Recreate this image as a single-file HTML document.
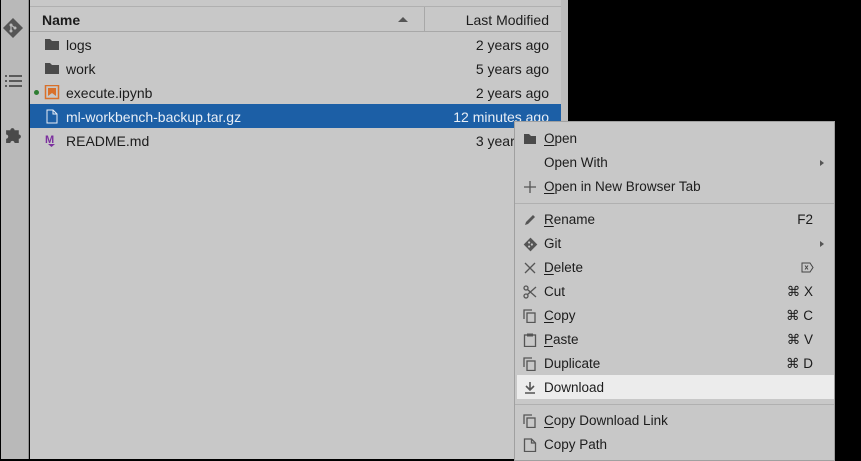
<!DOCTYPE html><html><head><style>
*{margin:0;padding:0;box-sizing:border-box}
body{width:861px;height:460px;background:#000;position:relative;overflow:hidden;font-family:"Liberation Sans",Arial,sans-serif;font-size:13px;color:#1c1c1c}
.side{position:absolute;left:1px;top:0;width:28px;height:459px;background:#b9b9b9;border-right:1px solid #8f8f8f}
.panel{position:absolute;left:30px;top:0;width:531px;height:459px;background:#c8c8c8;font-size:14px}
.strip{position:absolute;left:561px;top:0;width:7px;height:459px;background:#bdbdbd}
.hdr{position:absolute;left:0;top:6px;width:531px;height:26px;border-top:1px solid #b0b0b0;border-bottom:1px solid #a8a8a8;font-weight:bold}
.row{position:absolute;left:0;width:531px;height:24px;line-height:26px}
.row .n{position:absolute;left:36px}.row .d{position:absolute;right:12px}
.sel{background:#1c5fa6;color:#e8eef6}
.ic{position:absolute;left:14px;top:5px}
.menu{position:absolute;left:514px;top:121px;width:321px;height:340px;background:#c8c8c8;border:1px solid #a0a0a0;font-size:13.5px}
.mi{position:absolute;left:0;width:319px;height:24px;line-height:26px}
.mi .t{position:absolute;left:29px}.mi .k{position:absolute;right:21px}
.mi svg{position:absolute;left:8px;top:6px}
.u{text-decoration:underline;text-underline-offset:2px}
.sep{position:absolute;left:0;width:319px;height:1px;background:#b0b0b0}
.arr{position:absolute;right:10px;top:10px;width:0;height:0;border-left:4px solid #555;border-top:3.5px solid transparent;border-bottom:3.5px solid transparent}
</style></head><body>
<div class="side">
<svg style="position:absolute;left:1px;top:17px" width="22" height="22" viewBox="0 0 22 22"><path d="M11 1 L21 11 L11 21 L1 11Z" fill="#555"/><circle cx="9" cy="8" r="1.5" fill="#b9b9b9"/><circle cx="9" cy="14" r="1.5" fill="#b9b9b9"/><circle cx="13" cy="11" r="1.5" fill="#b9b9b9"/><path d="M9 8V14M9 8L13 11" stroke="#b9b9b9" stroke-width="1.2"/></svg>
<svg style="position:absolute;left:4px;top:74px" width="17" height="14"><g fill="#5a5a5a"><rect x="0" y="1" width="2" height="2"/><rect x="4" y="1" width="13" height="2"/><rect x="0" y="6" width="2" height="2"/><rect x="4" y="6" width="13" height="2"/><rect x="0" y="11" width="2" height="2"/><rect x="4" y="11" width="13" height="2"/></g></svg>
<svg style="position:absolute;left:3px;top:125px" width="19" height="19" viewBox="0 0 18 18"><path d="M2 5h4a2 2 0 1 1 4 0h4v4a2 2 0 1 1 0 4v4H10a2 2 0 1 0-4 0H2v-4a2 2 0 1 0 0-4z" fill="#4a4a4a"/></svg>
</div>
<div class="panel">
<div class="hdr"><span style="position:absolute;left:12px;top:5px">Name</span><span style="position:absolute;left:368px;top:10px;border-bottom:5px solid #555;border-left:5px solid transparent;border-right:5px solid transparent"></span><span style="position:absolute;left:394px;top:0;height:24px;border-left:1px solid #a8a8a8"></span><span style="position:absolute;right:12px;top:5px;font-weight:normal">Last Modified</span></div>
<div class="row" style="top:32px"><svg class="ic" width="16" height="14"><path d="M1 2h5l2 2h7v9H1z" fill="#4a4a4a"/></svg><span class="n">logs</span><span class="d">2 years ago</span></div>
<div class="row" style="top:56px"><svg class="ic" width="16" height="14"><path d="M1 2h5l2 2h7v9H1z" fill="#4a4a4a"/></svg><span class="n">work</span><span class="d">5 years ago</span></div>
<div class="row" style="top:80px"><span style="position:absolute;left:4px;top:10px;width:5px;height:5px;border-radius:50%;background:#2e7d32"></span><svg class="ic" width="16" height="16"><rect x="1.5" y="0.5" width="13" height="13" fill="none" stroke="#d9702a" stroke-width="1.5"/><path d="M4 3h8v8l-4-3-4 3z" fill="#d9702a"/></svg><span class="n">execute.ipynb</span><span class="d">2 years ago</span></div>
<div class="row sel" style="top:104px"><svg class="ic" width="16" height="16"><path d="M3 1h6l4 4v9H3z M9 1v4h4" fill="none" stroke="#e8eef6" stroke-width="1"/></svg><span class="n">ml-workbench-backup.tar.gz</span><span class="d">12 minutes ago</span></div>
<div class="row" style="top:128px"><svg class="ic" width="16" height="16"><text x="1" y="10" font-size="11" font-weight="bold" fill="#7b2f9e" font-family="Liberation Sans">M</text><path d="M4 11h7l-3.5 3z" fill="#7b2f9e"/></svg><span class="n">README.md</span><span class="d">3 years ago</span></div>
</div>
<div class="strip"></div>
<div class="menu">
<div class="mi" style="top:4px"><svg width="14" height="14"><path d="M1 2h5l2 2h5v8H1z" fill="#4a4a4a"/></svg><span class="t"><span class="u">O</span>pen</span></div>
<div class="mi" style="top:28px"><span class="t">Open With</span><span class="arr"></span></div>
<div class="mi" style="top:52px"><svg width="14" height="14"><path d="M7 1v12M1 7h12" stroke="#555" stroke-width="1.3"/></svg><span class="t"><span class="u">O</span>pen in New Browser Tab</span></div>
<div class="sep" style="top:81px"></div>
<div class="mi" style="top:85px"><svg width="14" height="14"><path d="M2 12l1-3 7-7 2 2-7 7z" fill="#555"/></svg><span class="t"><span class="u">R</span>ename</span><span class="k">F2</span></div>
<div class="mi" style="top:109px"><svg width="15" height="15" viewBox="0 0 22 22"><path d="M11 1 L21 11 L11 21 L1 11Z" fill="#555"/><circle cx="9" cy="8" r="1.6" fill="#c8c8c8"/><circle cx="9" cy="14" r="1.6" fill="#c8c8c8"/><circle cx="13" cy="11" r="1.6" fill="#c8c8c8"/></svg><span class="t">Git</span><span class="arr"></span></div>
<div class="mi" style="top:133px"><svg width="14" height="14"><path d="M2 2l10 10M12 2L2 12" stroke="#555" stroke-width="1.3"/></svg><span class="t"><span class="u">D</span>elete</span><svg style="left:auto;right:20px;top:7px" width="13" height="11"><path d="M1 1h8l3 4.5-3 4.5H1z" fill="none" stroke="#444"/><path d="M4 3.5l3 4M7 3.5l-3 4" stroke="#444"/></svg></div>
<div class="mi" style="top:157px"><svg width="14" height="14"><circle cx="3" cy="11" r="2" fill="none" stroke="#555" stroke-width="1.3"/><circle cx="3" cy="3" r="2" fill="none" stroke="#555" stroke-width="1.3"/><path d="M4.5 4.5L13 12M4.5 9.5L13 2" stroke="#555" stroke-width="1.3"/></svg><span class="t">Cut</span><span class="k">⌘ X</span></div>
<div class="mi" style="top:181px"><svg width="14" height="14"><path d="M1 10V1h8" fill="none" stroke="#555" stroke-width="1.3"/><rect x="4" y="4" width="8" height="9.5" fill="none" stroke="#555" stroke-width="1.3"/></svg><span class="t"><span class="u">C</span>opy</span><span class="k">⌘ C</span></div>
<div class="mi" style="top:205px"><svg width="14" height="14"><rect x="1.5" y="2" width="11" height="11.5" fill="none" stroke="#555" stroke-width="1.3"/><rect x="4" y="0.5" width="6" height="3" fill="#555"/></svg><span class="t"><span class="u">P</span>aste</span><span class="k">⌘ V</span></div>
<div class="mi" style="top:229px"><svg width="14" height="14"><path d="M1 10V1h8" fill="none" stroke="#555" stroke-width="1.3"/><rect x="4" y="4" width="8" height="9.5" fill="none" stroke="#555" stroke-width="1.3"/></svg><span class="t">Duplicate</span><span class="k">⌘ D</span></div>
<div class="mi" style="top:253px;left:2px;width:317px;background:#ececec"><svg style="left:6px" width="14" height="14"><path d="M7 1v7M3 5l4 4 4-4" stroke="#555" stroke-width="1.6" fill="none"/><path d="M2 12h10" stroke="#555" stroke-width="1.5"/></svg><span class="t" style="left:27px">Download</span></div>
<div class="sep" style="top:282px"></div>
<div class="mi" style="top:286px"><svg width="14" height="14"><path d="M1 10V1h8" fill="none" stroke="#555" stroke-width="1.3"/><rect x="4" y="4" width="8" height="9.5" fill="none" stroke="#555" stroke-width="1.3"/></svg><span class="t"><span class="u">C</span>opy Download Link</span></div>
<div class="mi" style="top:310px"><svg width="14" height="14"><path d="M1.5 1h7l4 4v8.5h-11z M8.5 1v4h4" fill="none" stroke="#555" stroke-width="1.3"/></svg><span class="t">Copy Path</span></div>
</div>
</body></html>
